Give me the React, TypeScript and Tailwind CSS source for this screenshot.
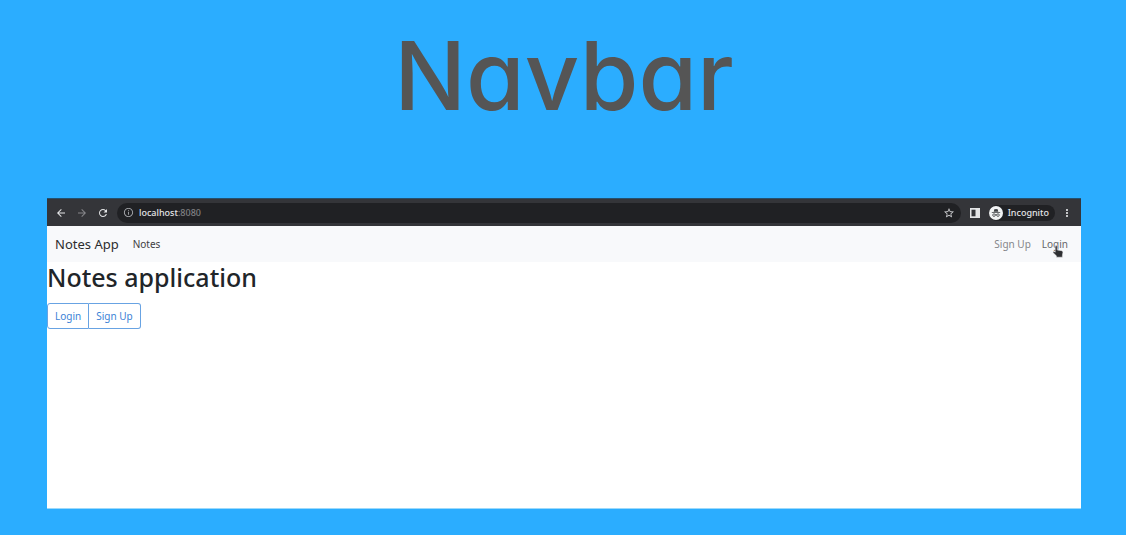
import {
  MdArrowBack,
  MdArrowForward,
  MdInfoOutline,
  MdMoreVert,
  MdRefresh,
  MdStarBorder,
} from "react-icons/md";

function SidePanelIcon() {
  return (
    <svg viewBox="0 0 10 10" className="size-[10px]" aria-hidden="true">
      <path d="M0 0h10v10H0z" fill="#e4e5e7" />
      <path d="M1.5 1.7h4v6.6h-4z" fill="#343539" />
    </svg>
  );
}

function IncognitoIcon() {
  return (
    <svg viewBox="0 0 14 14" className="size-[14px]" aria-hidden="true">
      <circle cx="7" cy="7" r="7" fill="#f1f3f4" />
      <path
        d="M4.7 5.8 5.3 3.4Q5.5 2.8 6.1 3L7 3.3 7.9 3Q8.5 2.8 8.7 3.4L9.3 5.8zM2.8 6.3h8.4v.8H2.8z"
        fill="#3c4043"
      />
      <g fill="none" stroke="#3c4043" strokeWidth=".8">
        <circle cx="5" cy="9.1" r="1.3" />
        <circle cx="9" cy="9.1" r="1.3" />
        <path d="M6.2 8.9q.8-.5 1.6 0" />
      </g>
    </svg>
  );
}

function HandCursor() {
  return (
    <svg
      viewBox="0 0 12 14"
      className="pointer-events-none absolute top-[9px] left-[10px] h-[14px] w-[12px]"
      aria-hidden="true"
    >
      <path
        d="M3.2 1.8Q3.2.6 4.2.6T5.2 1.8V5L9.6 5.7Q11 6 10.9 7.4L10.4 10.3V12.2H4.4V10.8L1.2 7.8Q.7 7.1 1.4 6.6 2 6.3 2.6 6.7L3.2 7.2z"
        fill="#2f3033"
        stroke="#f1f1f1"
        strokeWidth=".5"
      />
    </svg>
  );
}

function BrowserBar() {
  return (
    <div className="flex h-7 items-center border-t border-[#24506f] bg-[#343539] text-[9px] leading-4 font-medium text-[#e4e5e7]">
      <div className="flex items-center gap-[9px] pr-2 pl-2">
        <button type="button" aria-label="Back">
          <MdArrowBack className="size-3" />
        </button>
        <button type="button" aria-label="Forward" className="text-[#85868a]">
          <MdArrowForward className="size-3" />
        </button>
        <button type="button" aria-label="Reload">
          <MdRefresh className="size-3" />
        </button>
      </div>
      <div className="flex h-5 flex-1 items-center rounded-full bg-[#202124] pr-[6px] pl-[6px]">
        <MdInfoOutline className="size-[11px] text-[#a5a7ab]" />
        <span className="flex-1 pl-[5px]">
          localhost<span className="text-[#808185]">:8080</span>
        </span>
        <button type="button" aria-label="Bookmark this page">
          <MdStarBorder className="size-3 text-[#d0d1d4]" />
        </button>
      </div>
      <button type="button" aria-label="Side panel" className="ml-[9px]">
        <SidePanelIcon />
      </button>
      <div className="ml-[9px] flex h-4 items-center gap-[5px] rounded-full bg-[#202124] pr-[6px]">
        <IncognitoIcon />
        <span>Incognito</span>
      </div>
      <button type="button" aria-label="Menu" className="mr-2 ml-[6px]">
        <MdMoreVert className="size-3" />
      </button>
    </div>
  );
}

function SiteNav() {
  return (
    <nav className="flex h-9 items-center bg-[#f8f9fb] pr-[13px] pl-2 text-[10px] leading-4 text-[#3e4042]">
      <a href="#home" className="text-[13px] text-[#2b2d2f]">
        Notes App
      </a>
      <a href="#notes" className="ml-[14px]">
        Notes
      </a>
      <a href="#signup" className="ml-auto text-[#85868a]">
        Sign Up
      </a>
      <a href="#login" className="relative ml-[11px] text-[#65676a]">
        Login
        <HandCursor />
      </a>
    </nav>
  );
}

export default function App() {
  return (
    <div className="flex min-h-screen flex-col bg-[#2badff] pr-[45px] pb-[26px] pl-[47px] font-['Noto_Sans',sans-serif]">
      <h1 className="pt-4 pb-[62px] text-center font-['Inter',sans-serif] text-[95px] leading-[120px] font-medium text-[#555555] [font-feature-settings:'cv11']">
        Navbar
      </h1>
      <section className="flex flex-1 flex-col border-b border-[#9bd9fb] bg-white">
        <BrowserBar />
        <SiteNav />
        <main>
          <h2 className="text-[25px] leading-[30px] font-medium text-[#212529]">
            Notes application
          </h2>
          <div className="mt-[11px] flex text-[10px] leading-4 text-[#3b82d6]">
            <button type="button" className="rounded-l-[3px] border border-[#68a3e3] px-[7px] py-1">
              Login
            </button>
            <button
              type="button"
              className="rounded-r-[3px] border border-l-0 border-[#68a3e3] px-[7px] py-1"
            >
              Sign Up
            </button>
          </div>
        </main>
      </section>
    </div>
  );
}
